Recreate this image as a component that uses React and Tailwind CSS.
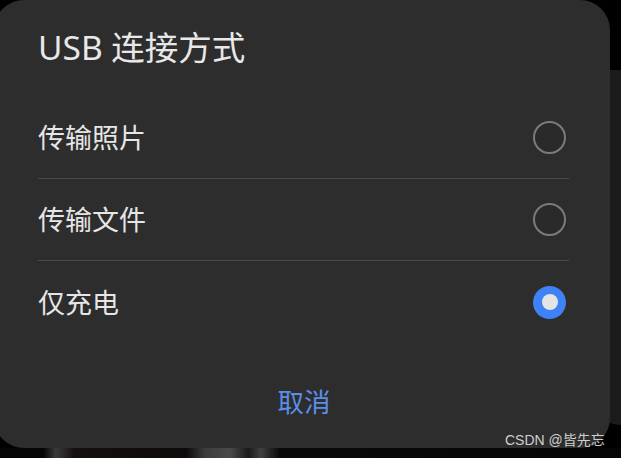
import React from "react";

const font = { fontFamily: '"Noto Sans", "Noto Sans CJK SC", sans-serif' };

function Radio({ checked }) {
  if (checked) {
    return (
      <div className="w-[33px] h-[33px] rounded-full bg-[#3f82f6] flex items-center justify-center">
        <div className="w-[16px] h-[16px] rounded-full bg-[#e4e4e4]" />
      </div>
    );
  }
  return <div className="w-[33px] h-[33px] rounded-full border-2 border-[#7b7b7b] bg-[#2a2a2a]" />;
}

function Row({ label, checked, divider }) {
  return (
    <div className={"h-[82px] flex items-center justify-between pr-[3px] " + (divider ? "border-b border-[#4a4a4a]" : "")}>
      <span className="text-[27px] text-[#e6e6e6] leading-none">{label}</span>
      <Radio checked={checked} />
    </div>
  );
}

export default function App() {
  return (
    <div
      className="relative w-[621px] h-[458px] bg-black overflow-hidden"
      style={font}
    >
      <div className="absolute right-0 top-[70px] w-[30px] h-[355px] bg-[#1b1b1b] rounded-bl-[30px]" />
      <div className="relative ml-[-6px] w-[616px] h-[448px] bg-[#2d2d2d] rounded-[30px] pl-[44px] pr-[41px] flex flex-col">
        <div className="h-[97px] flex items-center pb-[2px]">
          <span className="text-[33.5px] text-[#e8e8e8] leading-none">USB 连接方式</span>
        </div>
        <Row label="传输照片" divider />
        <Row label="传输文件" divider />
        <Row label="仅充电" checked />
        <div className="flex-1 flex items-center justify-center pt-[14px] pl-[1px]">
          <span className="text-[26.5px] text-[#5b8ee8] leading-none">取消</span>
        </div>
      </div>
      <div className="h-[10px] bg-[linear-gradient(90deg,#050505_0%,#050505_7%,#3a3a3a_9%,#151010_12%,#0d0a0a_30%,#3c3c3c_33%,#4a4a4a_37%,#1a1a1a_40%,#404040_42%,#0a0a0a_45%,#050505_100%)]" />
      <div
        className="absolute left-[505px] top-[433px] text-[14px] text-[#cfcfcf] leading-none"
        style={{ fontFamily: '"Liberation Sans", "Noto Sans CJK SC", sans-serif' }}
      >
        CSDN @皆先忘
      </div>
    </div>
  );
}
